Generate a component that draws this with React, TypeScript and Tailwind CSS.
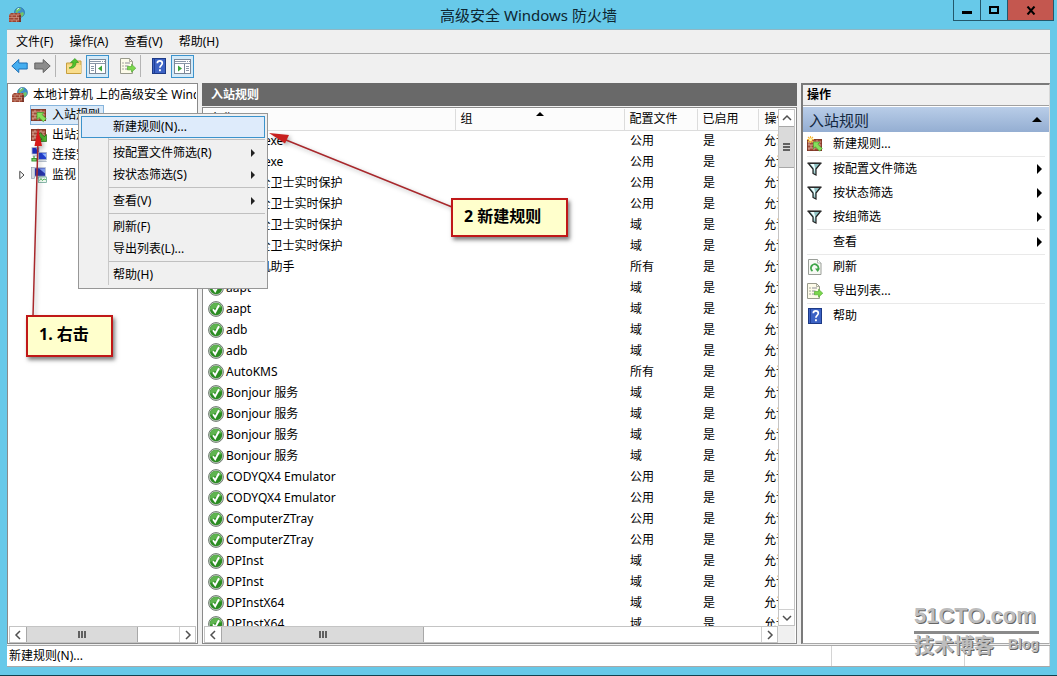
import { ReactNode } from "react";
import { clsx } from "clsx";

const REGLES: [string, string][] = [
  ["360ap.exe", "公用"],
  ["360ap.exe", "公用"],
  ["360安全卫士实时保护", "公用"],
  ["360安全卫士实时保护", "公用"],
  ["360安全卫士实时保护", "域"],
  ["360安全卫士实时保护", "域"],
  ["360手机助手", "所有"],
  ["aapt", "域"],
  ["aapt", "域"],
  ["adb", "域"],
  ["adb", "域"],
  ["AutoKMS", "所有"],
  ["Bonjour 服务", "域"],
  ["Bonjour 服务", "域"],
  ["Bonjour 服务", "域"],
  ["Bonjour 服务", "域"],
  ["CODYQX4 Emulator", "公用"],
  ["CODYQX4 Emulator", "公用"],
  ["ComputerZTray", "公用"],
  ["ComputerZTray", "公用"],
  ["DPInst", "域"],
  ["DPInst", "域"],
  ["DPInstX64", "域"],
  ["DPInstX64", "域"],
];

function Svg({ children, className }: { children: ReactNode; className?: string }) {
  return (
    <svg viewBox="0 0 16 16" className={clsx("size-4 shrink-0", className)} aria-hidden="true">
      {children}
    </svg>
  );
}

function Bricks({ y = 2 }: { y?: number }) {
  return (
    <g>
      <rect x="0" y={y} width="15" height="12" fill="#a04a36" />
      <path
        d={`M0 ${y + 3}h15M0 ${y + 6}h15M0 ${y + 9}h15M4 ${y}v3M10 ${y}v3M2 ${y + 3}v3M7 ${y + 3}v3M12 ${y + 3}v3M4 ${y + 6}v3M10 ${y + 6}v3M2 ${y + 9}v3M7 ${y + 9}v3M12 ${y + 9}v3`}
        stroke="#dfb5a4"
        strokeWidth="0.8"
      />
      <rect x="0.4" y={y + 0.4} width="14.2" height="11.2" fill="none" stroke="#7c3526" strokeWidth="0.8" />
    </g>
  );
}

function FirewallIcon() {
  return (
    <Svg>
      <circle cx="10.5" cy="5.5" r="5" fill="#3f8fca" stroke="#23659c" strokeWidth="0.6" />
      <path d="M7 3c1-2 3-2.300 5-1.500l-1 2-2 1-1 2-1.500-1zM11 6l3-1 1 2-2 3-2-2z" fill="#6fc46a" />
      <path d="M8 2.500l2-1.300" stroke="#d4f0ff" strokeWidth="1" />
      <path d="M0 8l2-2h9l1 2v7H0z" fill="#9c4532" />
      <path
        d="M0 8h12M0 10.500h12M0 13h12M3 8v2.500M7.500 8v2.500M5 10.500v2.500M9.500 10.500v2.500M3 13v2M7.500 13v2M5 6v2M9 6v2"
        stroke="#d39a86"
        strokeWidth="0.7"
      />
      <path d="M10 8l2 0v7h-2z" fill="#5c2219" opacity="0.6" />
    </Svg>
  );
}

function InboundIcon() {
  return (
    <Svg>
      <Bricks />
      <path d="M6 5.500h7l-2 2 4.300 4.200-3 3L8 10.500l-2 2z" fill="#86e05c" stroke="#3c9a28" strokeWidth="0.7" />
    </Svg>
  );
}

function OutboundIcon() {
  return (
    <Svg>
      <Bricks />
      <path d="M15.500 14.500h-7l2.300-2.300-4-4 2.500-2.500 4 4 2.200-2.200z" fill="#4fb833" stroke="#1f6d14" strokeWidth="0.7" />
    </Svg>
  );
}

function NewRuleIcon() {
  return (
    <Svg>
      <Bricks y={3} />
      <path d="M3.500 0v7M0 3.500h7M1 1l5 5M6 1L1 6" stroke="#f5b73a" strokeWidth="1.100" />
      <circle cx="3.500" cy="3.500" r="1.500" fill="#fff3b0" />
      <path d="M6.500 6h6.500l-2.200 2.200 4.500 4.300-2.600 2.700-4.400-4.400-1.800 2z" fill="#86e05c" stroke="#3c9a28" strokeWidth="0.6" />
    </Svg>
  );
}

function ConnectionIcon() {
  return (
    <Svg>
      <rect x="1" y="0.500" width="7" height="6.500" fill="#1c2cb4" stroke="#a9b3c9" strokeWidth="0.8" />
      <path d="M4.500 1.200H7.500v3z" fill="#7f9cf0" />
      <path d="M2 8h6l1 1.500H1z" fill="#c2cad6" />
      <rect x="7.500" y="5.500" width="8" height="7" fill="#2340d0" stroke="#a9b3c9" strokeWidth="0.8" />
      <path d="M11 6.500h4v4z" fill="#8fb4ff" />
      <path d="M8 13.500h7l1 1.500H7z" fill="#b5bfcc" />
      <path d="M1 14v-2.500h4.500V14zM3 11V9" stroke="#3a9b35" strokeWidth="1.200" fill="#7fd070" />
    </Svg>
  );
}

function MonitorIcon() {
  return (
    <Svg>
      <rect x="0.500" y="0.500" width="3" height="11" fill="#d5dbe3" stroke="#8893a5" strokeWidth="0.6" />
      <rect x="3.500" y="0.800" width="11" height="8.500" fill="#2733a8" stroke="#b9c3d4" />
      <path d="M8 1.500h6v5z" fill="#7f9cf0" />
      <path d="M6 9.800h6l1 2H5z" fill="#aeb7c4" />
      <rect x="7.500" y="10" width="8" height="5.500" fill="#eefaf0" stroke="#5a9a8a" strokeWidth="0.7" />
      <path d="M8.500 13.500l1.500-2 1.500 2 1.500-1.500 2 .8" stroke="#2fa33a" fill="none" strokeWidth="0.8" />
    </Svg>
  );
}

function CheckIcon() {
  return (
    <Svg>
      <circle cx="8" cy="8" r="7.400" fill="#c9d3c9" stroke="#6f7b70" strokeWidth="1" />
      <circle cx="8" cy="8" r="6.200" fill="#2b8c22" />
      <path d="M2.200 9a5.800 5.800 0 0 1 11.400-2.500C11 6.500 6 7 2.200 9z" fill="#5fb450" />
      <path d="M5 8.300l2.200 3L11 4.300" fill="none" stroke="#fff" strokeWidth="1.900" />
    </Svg>
  );
}

function FilterIcon() {
  return (
    <Svg>
      <path d="M1.500 2.500h12L9 8v6l-3-1.500V8z" fill="#8fc3c4" stroke="#222" strokeWidth="1.200" />
      <path d="M3.500 3h3.500l1 4v5L6.700 7z" fill="#f2ffff" />
      <path d="M.5 2h14" stroke="#333" strokeWidth="1.200" />
    </Svg>
  );
}

function RefreshIcon() {
  return (
    <Svg>
      <path d="M1.500.5h9l3.500 3.500v11.500h-12.500z" fill="#f7f9f4" stroke="#9a9e98" />
      <path d="M10.500.5v3.500h3.500" fill="#fff" stroke="#9a9e98" strokeWidth="0.7" />
      <path d="M5.500 12A3.700 3.700 0 1 1 10.800 11" fill="none" stroke="#3fa548" strokeWidth="1.900" />
      <path d="M8 9.500h5l-2.300 3.500z" fill="#3fa548" />
    </Svg>
  );
}

function ExportIcon() {
  return (
    <Svg>
      <path d="M.5.5h9l3 3v12H.5z" fill="#fdfbe9" stroke="#999a8c" />
      <path d="M9.500.5v3h3" fill="none" stroke="#999a8c" strokeWidth="0.8" />
      <path d="M2.500 5h1M2.500 8h1M2.500 11h1" stroke="#555" />
      <path d="M5 5h5M5 8h3.500M5 11h3" stroke="#8d8d99" />
      <path d="M7.500 8.500h4V6.200l4.300 4-4.300 4v-2.400h-4z" fill="#7bd74c" stroke="#48a52a" strokeWidth="0.6" />
    </Svg>
  );
}

function HelpIcon() {
  return (
    <Svg>
      <rect x="1.500" y="0.500" width="13" height="15" fill="#3c62c4" stroke="#1d3a86" />
      <path d="M3.500 1v14" stroke="#1f3f96" />
      <path d="M6.300 5.300c0-3.200 5-3.200 5 0 0 2-2.400 2-2.400 4.400" fill="none" stroke="#fff" strokeWidth="1.700" />
      <rect x="8" y="11.300" width="1.900" height="1.900" fill="#fff" />
    </Svg>
  );
}

function FolderUpIcon() {
  return (
    <Svg>
      <path d="M.5 5h8.500l1-2h5v12.500H.5z" fill="#f0d27a" stroke="#c79f3e" />
      <path d="M1 7h14v8H1z" fill="#f9dd8c" />
      <path d="M3 10c3-1 4-3 4-5.500H4.500L9 .5 12.500 4.500H10c0 4-2.500 6.500-7 5.500z" fill="#53c22e" stroke="#2c8e18" strokeWidth="0.6" />
    </Svg>
  );
}

function PaneIcon({ right }: { right?: boolean }) {
  return (
    <svg viewBox="0 0 17 15" className="h-[15px] w-[17px]" aria-hidden="true">
      <rect x="0.500" y="0.500" width="16" height="14" fill="#fff" stroke="#7b8797" />
      <path d="M1 2.500h15M1 4.500h15" stroke="#8b97a8" />
      <path d="M12 2.500h1M14 2.500h1" stroke="#fff" />
      {right ? (
        <g>
          <path d="M10.500 5v9" stroke="#7b8797" />
          <path d="M12 7.500h3M12 9.500h3M12 11.500h3" stroke="#8b97a8" />
          <path d="M4 6.500l4 3-4 3z" fill="#3da53a" />
        </g>
      ) : (
        <g>
          <path d="M6.500 5v9" stroke="#7b8797" />
          <path d="M2 7.500h3M2 9.500h3M2 11.500h3" stroke="#8b97a8" />
          <path d="M13 6.500l-4 3 4 3z" fill="#3da53a" />
        </g>
      )}
    </svg>
  );
}

function ArrowIcon({ fill, stroke, back }: { fill: string; stroke: string; back?: boolean }) {
  return (
    <svg viewBox="0 0 17 16" className="h-4 w-[17px]" aria-hidden="true">
      <path
        d={back ? "M.8 8l7-6.500V5h8.400v6H7.800v3.500z" : "M16.200 8l-7-6.500V5H.8v6h8.400v3.500z"}
        fill={fill}
        stroke={stroke}
      />
    </svg>
  );
}

function Chevron({ d }: { d: string }) {
  return (
    <svg viewBox="0 0 10 10" className="size-[10px]" aria-hidden="true">
      <path d={d} fill="none" stroke="#505050" strokeWidth="1.500" />
    </svg>
  );
}

function HScroll({ thumb }: { thumb: string }) {
  return (
    <div className="flex h-[17px] flex-1 border border-[#c4c4c4] bg-white">
      <button aria-label="向左滚动" className="flex w-4 items-center justify-center">
        <Chevron d="M7 1L3 5l4 4" />
      </button>
      <div className={clsx("flex items-center justify-center gap-px border-x border-[#a8a8a8] bg-[#dadada]", thumb)}>
        <span className="h-[7px] w-[2px] bg-[#606060]" />
        <span className="h-[7px] w-[2px] bg-[#606060]" />
        <span className="h-[7px] w-[2px] bg-[#606060]" />
      </div>
      <div className="flex-1" />
      <button aria-label="向右滚动" className="flex w-4 items-center justify-center border-l border-[#d0d0d0]">
        <Chevron d="M3 1l4 4-4 4" />
      </button>
    </div>
  );
}

function VScroll() {
  return (
    <div className="flex w-[17px] shrink-0 flex-col border border-[#c4c4c4] bg-white">
      <button aria-label="向上滚动" className="flex h-4 items-center justify-center">
        <Chevron d="M1 7l4-4 4 4" />
      </button>
      <div className="flex h-[42px] flex-col items-center justify-center gap-px border-y border-[#a8a8a8] bg-[#dadada]">
        <span className="h-[2px] w-[7px] bg-[#606060]" />
        <span className="h-[2px] w-[7px] bg-[#606060]" />
        <span className="h-[2px] w-[7px] bg-[#606060]" />
      </div>
      <div className="flex-1" />
      <button aria-label="向下滚动" className="flex h-4 items-center justify-center border-t border-[#d0d0d0]">
        <Chevron d="M1 3l4 4 4-4" />
      </button>
    </div>
  );
}

function TitleBar() {
  return (
    <header className="relative flex h-[29px] shrink-0 items-center pr-[18px] pl-[2px]">
      <FirewallIcon />
      <h1 className="flex-1 text-center text-[15px] text-[#0d2530]">高级安全 Windows 防火墙</h1>
      <div className="absolute top-0 right-[-4px] flex h-[21px] border border-t-0 border-[#23586c]">
        <button aria-label="最小化" className="flex w-[27px] items-center justify-center border-r border-[#23586c]">
          <span className="mt-1 h-[3px] w-[10px] bg-black" />
        </button>
        <button aria-label="最大化" className="flex w-[26px] items-center justify-center">
          <span className="h-2 w-[10px] border-2 border-black" />
        </button>
        <button aria-label="关闭" className="flex w-[46px] items-center justify-center border-l border-[#23586c] bg-[#c4574f]">
          <svg viewBox="0 0 10 9" className="h-[9px] w-[10px]" aria-hidden="true">
            <path d="M1.500.5l7 8M8.500.5l-7 8" stroke="#000" strokeWidth="2" />
          </svg>
        </button>
      </div>
    </header>
  );
}

function Toolbar() {
  return (
    <div className="flex h-[29px] shrink-0 items-center pb-[5px] pl-[4px]">
      <button aria-label="后退" className="w-[17px]">
        <ArrowIcon back fill="#45aef0" stroke="#1d6fb5" />
      </button>
      <button aria-label="前进" className="ml-[6px] w-[17px]">
        <ArrowIcon fill="#8c8c8c" stroke="#626262" />
      </button>
      <span className="ml-[4px] h-[22px] w-px bg-[#b4b4b4]" />
      <button aria-label="上一级" className="ml-[10px]">
        <FolderUpIcon />
      </button>
      <button aria-label="显示树" className="ml-[4px] flex size-[23px] items-center justify-center border border-[#3c93cc] bg-[#d4eaf8]">
        <PaneIcon />
      </button>
      <button aria-label="导出列表" className="ml-[11px]">
        <ExportIcon />
      </button>
      <span className="ml-[4px] h-[22px] w-px bg-[#b4b4b4]" />
      <button aria-label="帮助" className="ml-[10px]">
        <HelpIcon />
      </button>
      <button aria-label="显示操作" className="ml-[4px] flex size-[23px] items-center justify-center border border-[#3c93cc] bg-[#d4eaf8]">
        <PaneIcon right />
      </button>
    </div>
  );
}

function TreeRow({ icon, label, active, expandable }: { icon: ReactNode; label: string; active?: boolean; expandable?: boolean }) {
  return (
    <li className="flex h-5 items-center">
      <span className="flex w-[21px] justify-center pl-[5px]">
        {expandable && (
          <svg viewBox="0 0 6 10" className="h-[10px] w-[6px]" aria-hidden="true">
            <path d="M.8 1.200L5 5 .8 8.800z" fill="#fff" stroke="#444" />
          </svg>
        )}
      </span>
      <button
        className={clsx(
          "flex h-5 items-center gap-[5px] border pr-[3px]",
          active ? "border-[#86b4dc] bg-[#d9e9f8]" : "border-transparent",
        )}
      >
        {icon}
        {label}
      </button>
    </li>
  );
}

function TreePane() {
  return (
    <nav className="flex w-[191px] shrink-0 flex-col border border-[#8a8a8a] bg-white p-px pb-0 whitespace-nowrap">
      <ul className="flex-1 overflow-hidden">
        <li className="flex h-5 items-center gap-[5px] pl-[3px]">
          <FirewallIcon />
          <span className="min-w-0 flex-1 overflow-hidden">本地计算机 上的高级安全 Windows</span>
        </li>
        <TreeRow icon={<InboundIcon />} label="入站规则" active />
        <TreeRow icon={<OutboundIcon />} label="出站规则" />
        <TreeRow icon={<ConnectionIcon />} label="连接安全规则" />
        <TreeRow icon={<MonitorIcon />} label="监视" expandable />
      </ul>
      <div className="flex">
        <HScroll thumb="w-[112px]" />
      </div>
    </nav>
  );
}

function RuleTable() {
  return (
    <table className="w-full table-fixed border-collapse text-left whitespace-nowrap">
      <colgroup>
        <col />
        <col className="w-[169px]" />
        <col className="w-[73px]" />
        <col className="w-[61px]" />
        <col className="w-[20px]" />
      </colgroup>
      <thead>
        <tr className="h-[21px] border-b border-[#dcdcdc] bg-[#fcfcfc]">
          <th className="border-r border-[#dcdcdc] p-0 pl-[6px] font-normal">名称</th>
          <th className="relative border-r border-[#dcdcdc] p-0 pl-[5px] font-normal">
            组
            <span className="absolute top-[3px] left-1/2 -ml-1 border-x-4 border-b-4 border-x-transparent border-b-black" />
          </th>
          <th className="border-r border-[#dcdcdc] p-0 pl-[5px] font-normal">配置文件</th>
          <th className="border-r border-[#dcdcdc] p-0 pl-[5px] font-normal">已启用</th>
          <th className="overflow-hidden p-0 pl-[6px] font-normal">操作</th>
        </tr>
      </thead>
      <tbody>
        {REGLES.map(([nom, profil], i) => (
          <tr key={i} className="h-[21px]">
            <td className="p-0 pl-1">
              <span className="flex items-center gap-[2px]">
                <CheckIcon />
                {nom}
              </span>
            </td>
            <td />
            <td className="p-0 pl-[6px]">{profil}</td>
            <td className="p-0 pl-[6px]">是</td>
            <td className="overflow-hidden p-0 pl-[6px]">允许</td>
          </tr>
        ))}
      </tbody>
    </table>
  );
}

function RulesPane() {
  return (
    <main className="flex min-w-0 flex-1 flex-col">
      <h2 className="flex h-[23px] shrink-0 items-center bg-[#696969] pl-[9px] font-bold text-white">入站规则</h2>
      <div className="mt-px flex min-h-0 flex-1 flex-col border border-[#8a8a8a] bg-white p-px pb-0">
        <div className="flex min-h-0 flex-1">
          <div className="min-w-0 flex-1 overflow-hidden">
            <RuleTable />
          </div>
          <VScroll />
        </div>
        <div className="flex">
          <HScroll thumb="w-[203px]" />
          <div className="w-[17px] bg-[#f0f0f0]" />
        </div>
      </div>
    </main>
  );
}

function ActionItem({ icon, label, sub, line }: { icon?: ReactNode; label: string; sub?: boolean; line?: boolean }) {
  return (
    <li className={clsx(line && "border-b border-[#e9e9e9]")}>
      <button className="flex h-6 w-full items-center text-left">
        <span className="w-[26px]">{icon}</span>
        <span className="flex-1">{label}</span>
        {sub && <span className="mr-[3px] border-y-[5px] border-l-[5px] border-y-transparent border-l-black" />}
      </button>
    </li>
  );
}

function ActionsPane() {
  return (
    <aside className="flex w-[249px] shrink-0 flex-col border border-t-2 border-l-2 border-[#7a7a7a] border-r-[#d8d8d8] border-b-[#a8a8a8] bg-white">
      <h2 className="flex h-[21px] items-center border-b border-[#a0a0a0] bg-[#f0f0f0] pl-1 font-bold">操作</h2>
      <h3 className="mt-px flex h-[25px] items-center justify-between bg-linear-to-b from-[#b9cde8] to-[#94aed2] pr-[7px] pl-[6px] text-[15px] text-[#14283f]">
        入站规则
        <span className="border-x-[5px] border-b-[5px] border-x-transparent border-b-black" />
      </h3>
      <ul className="px-1">
        <ActionItem icon={<NewRuleIcon />} label="新建规则..." line />
        <ActionItem icon={<FilterIcon />} label="按配置文件筛选" sub />
        <ActionItem icon={<FilterIcon />} label="按状态筛选" sub />
        <ActionItem icon={<FilterIcon />} label="按组筛选" sub line />
        <ActionItem label="查看" sub line />
        <ActionItem icon={<RefreshIcon />} label="刷新" />
        <ActionItem icon={<ExportIcon />} label="导出列表..." line />
        <ActionItem icon={<HelpIcon />} label="帮助" />
      </ul>
    </aside>
  );
}

function MenuItem({ label, sub, active }: { label: string; sub?: boolean; active?: boolean }) {
  return (
    <button
      role="menuitem"
      className={clsx(
        "relative flex h-[22px] w-full items-center justify-between border pr-[9px] pl-[31px]",
        active ? "border-[#3c93cc] bg-[#deebfb]" : "border-transparent",
      )}
    >
      {label}
      {sub && <span className="border-y-4 border-l-4 border-y-transparent border-l-[#222]" />}
    </button>
  );
}

function MenuLine() {
  return <div className="mt-px mb-[2px] ml-[28px] h-px bg-[#c0c0c0]" />;
}

function ContextMenu() {
  return (
    <div role="menu" className="absolute top-[113px] left-[78px] w-[190px] border border-[#979797] bg-[#f0f0f0] p-[2px]">
      <span className="absolute top-[3px] bottom-[3px] left-[29px] w-px bg-[#c8c8c8]" />
      <MenuItem label="新建规则(N)..." active />
      <MenuLine />
      <MenuItem label="按配置文件筛选(R)" sub />
      <MenuItem label="按状态筛选(S)" sub />
      <MenuLine />
      <MenuItem label="查看(V)" sub />
      <MenuLine />
      <MenuItem label="刷新(F)" />
      <MenuItem label="导出列表(L)..." />
      <MenuLine />
      <MenuItem label="帮助(H)" />
    </div>
  );
}

function Callouts() {
  return (
    <div className="pointer-events-none absolute inset-0 overflow-hidden text-base font-bold">
      <svg width="600" height="400" className="absolute top-0 left-0 drop-shadow-[2px_2px_2px_rgba(0,0,0,0.3)]" aria-hidden="true">
        <path d="M33 316L38 140M452 207L286 140" stroke="#a8282c" strokeWidth="1.500" />
        <path d="M38 128l4 18h-7.500z" fill="#d81a1a" />
        <path d="M269 133l20 2-4 8.500z" fill="#c8201e" />
      </svg>
      <div className="absolute top-[315px] left-[26px] flex h-[42px] w-[87px] items-center border-2 border-[#c01818] bg-[#ffffcc] pb-[5px] pl-[11px] shadow-[2px_3px_4px_rgba(0,0,0,0.5)]">
        1. 右击
      </div>
      <div className="absolute top-[198px] left-[451px] flex h-[39px] w-[117px] items-center border-2 border-[#c01818] bg-[#ffffcc] pb-[3px] pl-[11px] shadow-[2px_3px_4px_rgba(0,0,0,0.5)]">
        2 新建规则
      </div>
    </div>
  );
}

function Watermark() {
  return (
    <div className="absolute right-[18px] bottom-[17px] w-[125px] font-bold text-[#bdbdbd] [text-shadow:1px_1px_0_#666]">
      <div className="border-b-[3px] border-[#8a8a8a] font-['Liberation_Sans',sans-serif] text-[22px] leading-[30px]">
        51CTO.com
      </div>
      <div className="flex items-start justify-between">
        <span className="text-[20px] leading-6">技术博客</span>
        <span className="font-['Liberation_Sans',sans-serif] text-[14px] leading-5">Blog</span>
      </div>
    </div>
  );
}

export default function App() {
  return (
    <div className="relative flex h-screen flex-col border-b border-[#12414f] bg-[#67c9e9] px-[7px] pb-2 font-['Noto_Sans','Noto_Sans_CJK_SC',sans-serif] text-xs text-black">
      <TitleBar />
      <div className="flex min-h-0 flex-1 flex-col border-t border-[#8fb7c4] bg-[#f0f0f0]">
        <div className="flex h-6 shrink-0 items-center gap-4 border-b border-[#a8a8a8] pl-[9px]">
          <button>文件(F)</button>
          <button>操作(A)</button>
          <button>查看(V)</button>
          <button>帮助(H)</button>
        </div>
        <Toolbar />
        <div className="flex min-h-0 flex-1 gap-1">
          <TreePane />
          <RulesPane />
          <ActionsPane />
        </div>
        <footer className="mt-px flex h-[22px] shrink-0 items-center border-y border-[#a8a8a8] bg-white pl-[2px]">
          <span className="flex-1">新建规则(N)...</span>
          <span className="h-full w-[133px] border-l border-[#d4d4d4]" />
          <span className="h-full w-[86px] border-x border-[#d4d4d4]" />
        </footer>
      </div>
      <ContextMenu />
      <Callouts />
      <Watermark />
    </div>
  );
}
